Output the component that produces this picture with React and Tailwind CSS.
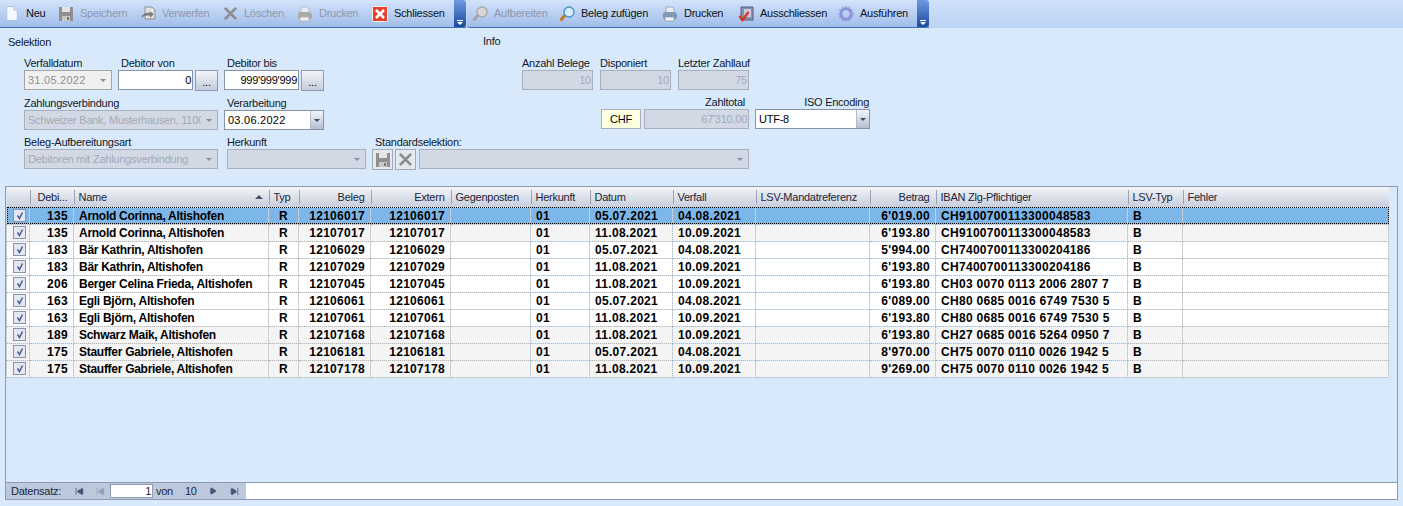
import React from 'react';
import { Play, SkipBack, SkipForward } from 'lucide-react';

const rows = [
  ['135', 'Arnold Corinna, Altishofen', '12106017', '05.07.2021', '04.08.2021', "6'019.00", 'CH9100700113300048583'],
  ['135', 'Arnold Corinna, Altishofen', '12107017', '11.08.2021', '10.09.2021', "6'193.80", 'CH9100700113300048583', true],
  ['183', 'Bär Kathrin, Altishofen', '12106029', '05.07.2021', '04.08.2021', "5'994.00", 'CH7400700113300204186'],
  ['183', 'Bär Kathrin, Altishofen', '12107029', '11.08.2021', '10.09.2021', "6'193.80", 'CH7400700113300204186'],
  ['206', 'Berger Celina Frieda, Altishofen', '12107045', '11.08.2021', '10.09.2021', "6'193.80", 'CH03 0070 0113 2006 2807 7'],
  ['163', 'Egli Björn, Altishofen', '12106061', '05.07.2021', '04.08.2021', "6'089.00", 'CH80 0685 0016 6749 7530 5'],
  ['163', 'Egli Björn, Altishofen', '12107061', '11.08.2021', '10.09.2021', "6'193.80", 'CH80 0685 0016 6749 7530 5'],
  ['189', 'Schwarz Maik, Altishofen', '12107168', '11.08.2021', '10.09.2021', "6'193.80", 'CH27 0685 0016 5264 0950 7', true],
  ['175', 'Stauffer Gabriele, Altishofen', '12106181', '05.07.2021', '04.08.2021', "8'970.00", 'CH75 0070 0110 0026 1942 5', true],
  ['175', 'Stauffer Gabriele, Altishofen', '12107178', '11.08.2021', '10.09.2021', "9'269.00", 'CH75 0070 0110 0026 1942 5', true],
];

const columns = [
  { label: '', w: 'w-[23px]' },
  { label: 'Debi...', w: 'w-[44px]', right: true },
  { label: 'Name', w: 'w-[195px]', sort: true },
  { label: 'Typ', w: 'w-[30px]' },
  { label: 'Beleg', w: 'w-[72px]', right: true },
  { label: 'Extern', w: 'w-[80px]', right: true },
  { label: 'Gegenposten', w: 'w-[80px]' },
  { label: 'Herkunft', w: 'w-[59px]' },
  { label: 'Datum', w: 'w-[83px]' },
  { label: 'Verfall', w: 'w-[83px]' },
  { label: 'LSV-Mandatreferenz', w: 'w-[114px]' },
  { label: 'Betrag', w: 'w-[66px]', right: true },
  { label: 'IBAN Zlg-Pflichtiger', w: 'w-[192px]' },
  { label: 'LSV-Typ', w: 'w-[55px]' },
  { label: 'Fehler', w: 'w-[206px]' },
];

const FloppyIcon = ({ className }) => (
  <svg viewBox="0 0 16 16" className={className}>
    <path d="M1 1h14v14H1z" fill="#8f8f8f" />
    <path d="M4 1h8v5H4z" fill="#e4e4e4" />
    <path d="M4 10h8v5H4z" fill="#c8c8c8" />
    <path d="M9 11h2v3H9z" fill="#777" />
  </svg>
);

const CrossIcon = ({ className }) => (
  <svg viewBox="0 0 16 16" className={className}>
    <path d="M2 2l12 12M14 2L2 14" stroke="#8d8d8d" strokeWidth="3" />
  </svg>
);

const PageIcon = () => (
  <svg viewBox="0 0 16 18" className="h-[17px] w-[14px]">
    <path d="M2 1h8l4 4v12H2z" fill="#f6f9ff" stroke="#a9bfe2" />
    <path d="M10 1v4h4" fill="#dce7f8" stroke="#a9bfe2" />
  </svg>
);

const PrinterIcon = ({ color = '#a9a9a9' }) => (
  <svg viewBox="0 0 16 16" className="h-[16px] w-[16px]">
    <path d="M4 1h6l2 2v4H4z" fill="#e9ecf2" stroke={color} strokeWidth="0.7" />
    <path d="M1 7l3-1h9l2 2v4l-3 2H3l-2-2z" fill={color} />
    <path d="M3 11h9v4H3z" fill="#f2f2f2" stroke={color} strokeWidth="0.7" />
  </svg>
);

const RevertIcon = () => (
  <svg viewBox="0 0 16 16" className="h-[16px] w-[16px]">
    <path d="M5 1h7l3 3v9H5z" fill="#e2e2e2" stroke="#8c8c8c" />
    <path d="M1 12c1-4 5-6 9-5l-1-2 5 3-4 4v-2c-3-1-6 0-9 2z" fill="#7d7d7d" />
  </svg>
);

const CloseRedIcon = () => (
  <svg viewBox="0 0 16 16" className="h-[16px] w-[16px]">
    <rect x="0.5" y="0.5" width="15" height="15" rx="1" fill="#e2432a" stroke="#f3f3f3" />
    <path d="M4 4l8 8M12 4l-8 8" stroke="#fff" strokeWidth="2.6" />
  </svg>
);

const LensIcon = ({ active }) => (
  <svg viewBox="0 0 16 16" className="h-[16px] w-[16px]">
    <path d="M1.5 14.5l5-6" stroke={active ? '#c8761d' : '#a5a5a5'} strokeWidth="3" />
    <circle cx="10" cy="6" r="5" fill={active ? '#d6eefc' : '#d8d8d8'} stroke={active ? '#4f91c9' : '#a7a7a7'} strokeWidth="1.4" />
  </svg>
);

const ExcludeIcon = () => (
  <svg viewBox="0 0 16 16" className="h-[16px] w-[16px]">
    <path d="M3 1h12v13H3z" fill="#8c8fb5" stroke="#5a5c7c" />
    <path d="M6 3h7v8H6z" fill="#c9cbe0" />
    <path d="M1.5 10l3 4 6-8" fill="none" stroke="#d8321f" strokeWidth="2.4" />
  </svg>
);

const GearIcon = () => (
  <svg viewBox="0 0 16 16" className="h-[16px] w-[16px]">
    <circle cx="8" cy="8" r="5.2" fill="none" stroke="#8d91d8" strokeWidth="3" />
    <circle cx="8" cy="8" r="7.2" fill="none" stroke="#a3a6e2" strokeWidth="1.4" strokeDasharray="2 1.6" />
  </svg>
);

const ToolItem = ({ icon, label, disabled, className = '' }) => (
  <div className={`flex items-center gap-[6px] ${className}`}>
    <span className="flex w-[16px] justify-center">{icon}</span>
    <span className={disabled ? 'text-[#8d99ab]' : 'text-[#0b1320]'}>{label}</span>
  </div>
);

const Grip = () => (
  <div className="relative w-[12px] self-stretch rounded-r-[3px] bg-gradient-to-b from-[#6f9be0] to-[#184a9f]">
    <span className="absolute bottom-[6px] left-[3px] h-[1px] w-[6px] bg-white" />
    <svg viewBox="0 0 6 3" className="absolute bottom-[2px] left-[3px] h-[3px] w-[6px]">
      <path d="M0 0h6L3 3z" fill="#fff" />
    </svg>
  </div>
);

const Label = ({ children, className = '' }) => (
  <div className={`h-[15px] whitespace-nowrap leading-[15px] text-[#10192a] ${className}`}>{children}</div>
);

const boxDisabled = 'bg-[#d2d9e4] border border-[#a8afba] text-[#a2a9b5]';

const Combo = ({ value, disabled, grey, className = '' }) => (
  <div
    className={`flex h-[20px] flex-none items-center justify-between overflow-hidden whitespace-nowrap border pl-[3px] ${
      disabled
        ? `${grey ? 'border-[#a5a5a5] bg-[#f0f0f0] text-[#8e8e8e]' : boxDisabled}`
        : 'border-[#8694ab] bg-white text-black'
    } ${className}`}
  >
    <span className="overflow-hidden">{value}</span>
    {disabled ? (
      <span className="flex h-full w-[16px] flex-none items-center justify-center">
        <svg viewBox="0 0 6 3" className="h-[3px] w-[6px]"><path d="M0 0h6L3 3z" fill="#8a8f99" /></svg>
      </span>
    ) : (
      <span className="flex h-full w-[13px] flex-none items-center justify-center border-l border-[#b4bccb] bg-gradient-to-b from-[#f3f5f9] to-[#b5bfd2]">
        <svg viewBox="0 0 6 3" className="h-[3px] w-[6px]"><path d="M0 0h6L3 3z" fill="#3c4a66" /></svg>
      </span>
    )}
  </div>
);

const TextBox = ({ value, disabled, className = '' }) => (
  <div
    className={`flex h-[20px] items-center justify-end border pr-[1px] ${
      disabled ? boxDisabled : 'border-[#8694ab] bg-white text-black'
    } ${className}`}
  >
    {value}
  </div>
);

const DotsButton = () => (
  <div className="flex h-[21px] w-[23px] items-end justify-center border border-[#8f9cb3] bg-gradient-to-b from-[#f3f5f9] to-[#c3cbdb] leading-[16px] text-black">
    ...
  </div>
);

const Checkbox = () => (
  <span className="ml-[1px] flex h-[13px] w-[13px] items-center justify-center border border-[#8a93a8] bg-[#e3e7ef]">
    <svg viewBox="0 0 10 10" className="h-[10px] w-[10px]">
      <path d="M2.5 4.5l2 3 3-6" fill="none" stroke="#4a5f8f" strokeWidth="1.5" />
    </svg>
  </span>
);

const App = () => {
  return (
    <div
      className="flex h-[506px] w-[1403px] flex-col overflow-hidden bg-[#d8e9fc] text-[11px] tracking-[-0.25px]"
      style={{ fontFamily: '"Liberation Sans", Arial, sans-serif' }}
    >
      {/* Toolbars */}
      <div className="flex h-[28px] flex-none bg-gradient-to-b from-[#cfe0f9] to-[#bcd3f4]">
        <div className="flex w-[466px] flex-none items-center rounded-tl-[3px] border-b border-[#3f6fb5] bg-gradient-to-b from-[#d3e3fa] to-[#a0bdea] pl-[4px]">
          <ToolItem icon={<PageIcon />} label="Neu" className="w-[54px]" />
          <ToolItem icon={<FloppyIcon className="h-[16px] w-[16px]" />} label="Speichern" disabled className="w-[82px]" />
          <ToolItem icon={<RevertIcon />} label="Verwerfen" disabled className="w-[82px]" />
          <ToolItem icon={<CrossIcon className="h-[15px] w-[15px]" />} label="Löschen" disabled className="w-[75px]" />
          <ToolItem icon={<PrinterIcon />} label="Drucken" disabled className="w-[75px]" />
          <ToolItem icon={<CloseRedIcon />} label="Schliessen" className="flex-1" />
          <Grip />
        </div>
        <div className="ml-[1px] flex w-[462px] flex-none items-center rounded-l-[3px] border-b border-[#3f6fb5] bg-gradient-to-b from-[#d3e3fa] to-[#a0bdea] pl-[5px]">
          <ToolItem icon={<LensIcon />} label="Aufbereiten" disabled className="w-[87px]" />
          <ToolItem icon={<LensIcon active />} label="Beleg zufügen" className="w-[103px]" />
          <ToolItem icon={<PrinterIcon color="#8296b5" />} label="Drucken" className="w-[76px]" />
          <ToolItem icon={<ExcludeIcon />} label="Ausschliessen" className="w-[100px]" />
          <ToolItem icon={<GearIcon />} label="Ausführen" className="flex-1" />
          <Grip />
        </div>
      </div>

      {/* Selektion + Info */}
      <div className="flex h-[158px] flex-none">
        <div className="w-[483px] flex-none pl-[8px] pt-[7px]">
          <Label>Selektion</Label>
          <div className="mt-[6px] pl-[16px]">
            <div className="flex">
              <div className="w-[94px] flex-none">
                <Label>Verfalldatum</Label>
                <Combo value="31.05.2022" disabled grey className="mt-[-1px] w-[88px] tracking-[0.25px]" />
              </div>
              <div className="w-[106px] flex-none">
                <Label className="pl-[3px]">Debitor von</Label>
                <div className="mt-[-1px] flex items-start gap-[2px]">
                  <TextBox value="0" className="w-[75px]" />
                  <DotsButton />
                </div>
              </div>
              <div className="flex-none">
                <Label className="pl-[3px]">Debitor bis</Label>
                <div className="mt-[-1px] flex items-start gap-[2px]">
                  <TextBox value="999'999'999" className="w-[75px]" />
                  <DotsButton />
                </div>
              </div>
            </div>
            <div className="mt-[5px] flex">
              <div className="w-[200px] flex-none">
                <Label>Zahlungsverbindung</Label>
                <Combo value="Schweizer Bank, Musterhausen, 1100" disabled className="mt-[-1px] w-[194px]" />
              </div>
              <div className="flex-none">
                <Label className="pl-[3px]">Verarbeitung</Label>
                <Combo value="03.06.2022" className="mt-[-1px] w-[100px] tracking-[0.25px]" />
              </div>
            </div>
            <div className="mt-[5px] flex">
              <div className="w-[203px] flex-none">
                <Label>Beleg-Aufbereitungsart</Label>
                <Combo value="Debitoren mit Zahlungsverbindung" disabled className="mt-[-1px] w-[194px]" />
              </div>
              <div className="w-[145px] flex-none">
                <Label>Herkunft</Label>
                <Combo value="" disabled className="mt-[-1px] w-[139px]" />
              </div>
              <div className="flex-none">
                <Label className="pl-[3px]">Standardselektion:</Label>
                <div className="mt-[-1px] flex items-start gap-[2px]">
                  <div className="flex h-[21px] w-[21px] flex-none items-center justify-center border border-[#a3a9b4] bg-[#e4e8ef]">
                    <FloppyIcon className="h-[16px] w-[16px]" />
                  </div>
                  <div className="flex h-[21px] w-[21px] flex-none items-center justify-center border border-[#a3a9b4] bg-[#e4e8ef]">
                    <CrossIcon className="h-[15px] w-[15px]" />
                  </div>
                  <Combo value="" disabled className="ml-[1px] w-[330px]" />
                </div>
              </div>
            </div>
          </div>
        </div>

        <div className="flex-1 pt-[6px]">
          <Label>Info</Label>
          <div className="mt-[7px] flex gap-[7px] pl-[39px]">
            <div className="w-[71px]">
              <Label>Anzahl Belege</Label>
              <TextBox value="10" disabled className="mt-[-1px] w-[71px]" />
            </div>
            <div className="w-[71px]">
              <Label>Disponiert</Label>
              <TextBox value="10" disabled className="mt-[-1px] w-[71px]" />
            </div>
            <div className="w-[71px]">
              <Label>Letzter Zahllauf</Label>
              <TextBox value="75" disabled className="mt-[-1px] w-[71px]" />
            </div>
          </div>
          <div className="mt-[5px] flex pl-[118px]">
            <div className="mt-[14px] flex h-[20px] w-[40px] items-center justify-center border border-[#a8afba] bg-[#ffffe1] text-black">
              CHF
            </div>
            <div className="ml-[3px] w-[105px]">
              <Label className="pr-[4px] text-right">Zahltotal</Label>
              <TextBox value="67'310.00" disabled className="mt-[-1px] w-[105px]" />
            </div>
            <div className="ml-[6px] w-[115px]">
              <Label className="pr-[1px] text-right">ISO Encoding</Label>
              <Combo value="UTF-8" className="mt-[-1px] w-[115px]" />
            </div>
          </div>
        </div>
      </div>

      {/* Grid */}
      <div className="mx-[5px] flex h-[314px] w-[1393px] flex-none flex-col border border-[#8c9ab5]">
        <div className="flex-1 overflow-hidden">
          <table className="w-[1382px] table-fixed border-collapse text-black">
            <colgroup>
              {columns.map((col, i) => (
                <col key={i} className={col.w} />
              ))}
            </colgroup>
            <thead>
              <tr className="h-[20px] bg-gradient-to-b from-[#f3f4f7] to-[#c7cede]">
                {columns.map((col, i) => (
                  <th key={i} className="relative pl-[5px] pr-[6px] font-normal text-[#1c2638]">
                    {i > 0 && <span className="absolute left-0 top-[3px] h-[14px] w-[1px] bg-[#9aa3b5]" />}
                    <div className={`flex items-center whitespace-nowrap ${col.right ? 'justify-end' : col.sort ? 'justify-between' : 'justify-start'}`}>
                      <span>{col.label}</span>
                      {col.sort && (
                        <svg viewBox="0 0 8 4" className="h-[4px] w-[8px]"><path d="M0 4h8L4 0z" fill="#47536b" /></svg>
                      )}
                    </div>
                  </th>
                ))}
              </tr>
            </thead>
            <tbody className="text-[12px] font-bold leading-[14px] tracking-[0.3px]">
              {rows.map((r, i) => {
                const bg = i === 0 ? 'bg-[#7db7ea]' : r[7] ? 'bg-[#f4f4f4]' : 'bg-white';
                const td = 'h-[17px] overflow-hidden whitespace-nowrap border border-dotted border-[#b5b5b5] py-0 pl-[5px] pr-[5px]';
                return (
                  <tr key={i} className={`${bg} ${i === 0 ? 'outline-1 outline-offset-[-1px] outline-dotted outline-black' : ''}`}>
                    <td className={td}><Checkbox /></td>
                    <td className={`${td} text-right`}>{r[0]}</td>
                    <td className={`${td} tracking-[-0.28px]`}>{r[1]}</td>
                    <td className={`${td} text-center`}>R</td>
                    <td className={`${td} text-right`}>{r[2]}</td>
                    <td className={`${td} text-right`}>{r[2]}</td>
                    <td className={td}></td>
                    <td className={td}>01</td>
                    <td className={td}>{r[3]}</td>
                    <td className={td}>{r[4]}</td>
                    <td className={td}></td>
                    <td className={`${td} text-right`}>{r[5]}</td>
                    <td className={td}>{r[6]}</td>
                    <td className={td}>B</td>
                    <td className={td}></td>
                  </tr>
                );
              })}
            </tbody>
          </table>
        </div>

        {/* Navigator */}
        <div className="flex h-[17px] flex-none border-t border-[#8c9ab5] bg-white">
          <div className="flex w-[240px] items-center bg-[#bcc9dc] pl-[5px] text-[#1c2638]">
            <span className="w-[64px]">Datensatz:</span>
            <SkipBack className="h-[9px] w-[9px] fill-[#46567a] text-[#46567a]" />
            <SkipBack className="ml-[12px] h-[9px] w-[9px] fill-[#94a2b9] text-[#94a2b9]" />
            <div className="ml-[5px] flex h-[14px] w-[43px] items-center justify-end border border-[#8c9ab5] bg-white pr-[1px]">1</div>
            <span className="ml-[3px]">von</span>
            <span className="ml-[12px]">10</span>
            <Play className="ml-[12px] h-[8px] w-[8px] fill-[#46567a] text-[#46567a]" />
            <SkipForward className="ml-[13px] h-[9px] w-[9px] fill-[#46567a] text-[#46567a]" />
          </div>
        </div>
      </div>
    </div>
  );
};

export default App;
